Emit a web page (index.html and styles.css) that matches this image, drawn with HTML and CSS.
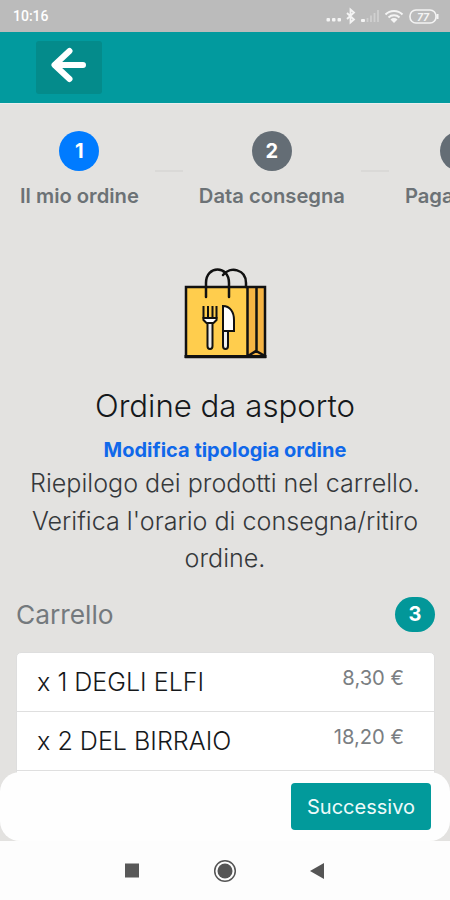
FILE: index.html
```html
<!DOCTYPE html>
<html lang="it">
<head>
  <meta charset="utf-8">
  <title>Ordine da asporto</title>
  <link rel="stylesheet" href="styles.css">
</head>
<body>
  <div class="app">
    <div class="status-bar">
      <span class="clock">10:16</span>
      <svg class="status-icons" width="116" height="20" viewBox="0 0 116 20">
        <g fill="#f4f4f4">
          <rect x="1.500" y="12" width="3.500" height="3.500" rx="1"/>
          <rect x="7" y="12" width="3.500" height="3.500" rx="1"/>
          <rect x="12.500" y="12" width="3.500" height="3.500" rx="1"/>
          <rect x="36" y="13" width="4" height="3" rx="1"/>
        </g>
        <path d="M22 7l7 6.500-3.500 3V3.500l3.500 3-7 6.500" fill="none" stroke="#f4f4f4" stroke-width="1.800"/>
        <path d="M42.500 16v-4M46 16V9.500M49.500 16V7M53 16V4" stroke="#d0d0d0" stroke-width="1.800"/>
        <g fill="none" stroke="#f4f4f4" stroke-width="2">
          <path d="M60.500 8.500a12 12 0 0 1 17 0M63.500 11.500a8 8 0 0 1 11 0"/>
        </g>
        <path d="M65.500 13.500a5 5 0 0 1 7 0L69 17z" fill="#f4f4f4"/>
        <rect x="85" y="4" width="26" height="13" rx="6" fill="none" stroke="#f4f4f4" stroke-width="1.600"/>
        <path d="M112.500 8v5" stroke="#f4f4f4" stroke-width="2"/>
        <text x="98" y="14.500" class="battery" text-anchor="middle">77</text>
      </svg>
    </div>

    <div class="header">
      <button class="back-btn">
        <svg width="38" height="36" viewBox="0 0 38 36">
          <path d="M19.500 4L4.500 18l15 14M5 18h28" fill="none" stroke="#fff" stroke-width="6" stroke-linecap="round" stroke-linejoin="round"/>
        </svg>
      </button>
    </div>

    <div class="content">
      <div class="stepper">
        <div class="step active">
          <span class="step-circle">1</span>
          <span class="step-label">Il mio ordine</span>
        </div>
        <div class="step-line"></div>
        <div class="step">
          <span class="step-circle">2</span>
          <span class="step-label">Data consegna</span>
        </div>
        <div class="step-line"></div>
        <div class="step">
          <span class="step-circle">3</span>
          <span class="step-label">Pagamento</span>
        </div>
      </div>

      <div class="intro">
        <svg class="bag" width="84" height="94" viewBox="0 0 84 94">
          <rect x="3" y="21" width="62" height="70" fill="#ffcd4d"/>
          <rect x="64" y="21" width="17" height="70" fill="#f6b444"/>
          <g fill="none" stroke="#111" stroke-width="2.500">
            <path d="M3 21h79v70H3zM64.500 21v70M73.500 21v66M65 90l8-5 9 5"/>
            <path d="M23 31V17c0-18 23-18 23 0v14M40 9c7-9 23-6 23 8v4" stroke-linecap="round"/>
          </g>
          <path d="M1.500 89h82v3h-82z" fill="#111"/>
          <g stroke="#111" stroke-width="2">
            <path d="M24.500 55h5v25c0 4-5 4-5 0z" fill="#eee"/>
            <path d="M20.500 40v12c0 6 13 6 13 0V40M25 40v12M29.500 40v12" fill="none"/>
            <path d="M20.500 52h13v2l-3 3h-7l-3-3z" fill="#fff"/>
            <path d="M40 65h5v15c0 4-5 4-5 0z" fill="#eee"/>
            <path d="M40 40c7 0 11 6 11 14v11H40z" fill="#fff"/>
          </g>
        </svg>
        <h1>Ordine da asporto</h1>
        <a class="edit-link">Modifica tipologia ordine</a>
        <p class="lead">Riepilogo dei prodotti nel carrello. Verifica l'orario di consegna/ritiro ordine.</p>
      </div>

      <div class="cart-title">
        <h2>Carrello</h2>
        <span class="badge">3</span>
      </div>

      <ul class="cart-list">
        <li class="cart-item">
          <span class="item-name">x 1 DEGLI ELFI</span>
          <span class="item-price">8,30 €</span>
        </li>
        <li class="cart-item">
          <span class="item-name">x 2 DEL BIRRAIO</span>
          <span class="item-price">18,20 €</span>
        </li>
        <li class="cart-item"></li>
      </ul>

      <div class="footer">
        <button class="next-btn">Successivo</button>
      </div>
    </div>

    <div class="nav-bar">
      <svg width="24" height="24" viewBox="0 0 24 24"><rect x="5" y="4.500" width="14" height="14" fill="#585858"/></svg>
      <svg width="24" height="24" viewBox="0 0 24 24">
        <circle cx="12" cy="12" r="10.300" fill="none" stroke="#555" stroke-width="1.500"/>
        <circle cx="12" cy="12" r="7.500" fill="#555"/>
      </svg>
      <svg width="24" height="24" viewBox="0 0 24 24"><path d="M4 12l14-8v16z" fill="#555"/></svg>
    </div>
  </div>
</body>
</html>
```

FILE: styles.css
```css
body {
  margin: 0;
  font-family: Inter, sans-serif;
  background-color: #fdfdfd;
}

.app {
  display: flex;
  flex-direction: column;
  height: 900px;
  overflow: hidden;
}

.status-bar {
  display: flex;
  justify-content: space-between;
  align-items: center;
  flex: none;
  height: 32px;
  padding: 0 9px 0 13px;
  box-sizing: border-box;
  background-color: #bbb;
}

.clock {
  font-family: Roboto, sans-serif;
  font-size: 14px;
  font-weight: 500;
  color: #fff;
}

.battery {
  font-family: Roboto, sans-serif;
  font-size: 11px;
  font-weight: bold;
  font-style: italic;
  fill: #f4f4f4;
}

.header {
  flex: none;
  height: 72px;
  padding: 9px 36px;
  box-sizing: border-box;
  background-color: #029a9e;
  border-bottom: 1px solid #e9eeee;
}

.back-btn {
  display: flex;
  justify-content: center;
  width: 66px;
  height: 53px;
  padding: 6px 0 0;
  border: none;
  border-radius: 3px;
  background-color: #048b8b;
}

.content {
  position: relative;
  flex: 1;
  overflow: hidden;
  background-color: #e3e2e0;
}

.stepper {
  display: flex;
  gap: 16px;
  width: max-content;
  padding: 27px 20px 0;
}

.step {
  display: flex;
  flex-direction: column;
  align-items: center;
  gap: 13px;
}

.step-circle {
  width: 40px;
  height: 40px;
  border-radius: 50%;
  background-color: #646d75;
  color: #fff;
  font-size: 20px;
  font-weight: bold;
  line-height: 40px;
  text-align: center;
}

.step.active .step-circle {
  background-color: #007bff;
}

.step-label {
  font-size: 20.2px;
  font-weight: 600;
  line-height: 24px;
  color: #6c7276;
}

.step-line {
  width: 28px;
  height: 2px;
  margin-top: 39px;
  background-color: #dad9d7;
}

.intro {
  display: flex;
  flex-direction: column;
  align-items: center;
  padding: 58px 16px 0;
  text-align: center;
}

h1 {
  margin: 24px 0 0;
  font-size: 31.2px;
  font-weight: 300;
  line-height: 44px;
  color: #15181b;
}

.edit-link {
  margin-top: 10px;
  font-size: 20px;
  font-weight: bold;
  line-height: 24px;
  color: #1068ea;
}

.lead {
  margin: 3px 0 0;
  font-size: 25.1px;
  font-weight: 300;
  line-height: 37.5px;
  color: #35383b;
}

.cart-title {
  display: flex;
  justify-content: space-between;
  align-items: center;
  height: 36px;
  padding: 19px 15px 0 16px;
}

h2 {
  margin: 0;
  font-size: 26.3px;
  font-weight: 400;
  color: #74797d;
}

.badge {
  width: 40px;
  height: 35px;
  border-radius: 18px;
  background-color: #029799;
  color: #fff;
  font-size: 20px;
  font-weight: bold;
  line-height: 35px;
  text-align: center;
}

.cart-list {
  margin: 19px 15px 0 16px;
  padding: 0;
  border: 1px solid #dedede;
  border-radius: 5px;
  background-color: #fff;
  list-style: none;
}

.cart-item {
  display: flex;
  justify-content: space-between;
  height: 58px;
  padding: 0 30px 0 20px;
  border-bottom: 1px solid #dfdfdf;
}

.item-name {
  font-size: 25.1px;
  font-weight: 300;
  line-height: 58px;
  color: #15181b;
}

.item-price {
  font-size: 20.2px;
  font-weight: 400;
  line-height: 50px;
  color: #7a7e82;
}

.footer {
  position: absolute;
  left: 0;
  right: 0;
  bottom: 0;
  display: flex;
  justify-content: flex-end;
  height: 69px;
  padding: 11px 19px 0;
  box-sizing: border-box;
  border-radius: 20px;
  background-color: #fefefe;
}

.next-btn {
  width: 140px;
  height: 47px;
  padding: 0;
  border: none;
  border-radius: 4px;
  background-color: #029a9b;
  color: #eefafa;
  font-family: Inter, sans-serif;
  font-size: 20px;
}

.nav-bar {
  display: flex;
  justify-content: center;
  gap: 69px;
  flex: none;
  height: 59px;
  padding-top: 18px;
  box-sizing: border-box;
  background-color: #fdfdfd;
}
```
